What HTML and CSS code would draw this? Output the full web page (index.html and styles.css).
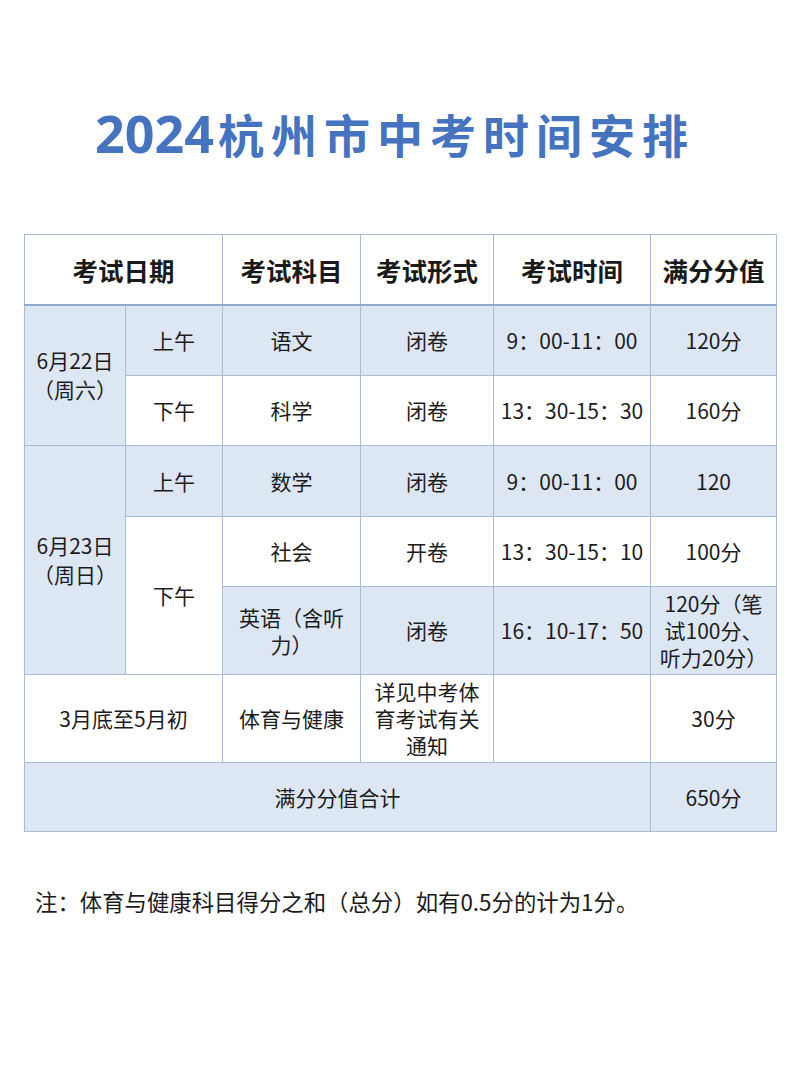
FILE: index.html
```html
<!DOCTYPE html>
<html lang="zh-CN">
<head>
<meta charset="utf-8">
<title>2024杭州市中考时间安排</title>
<link rel="stylesheet" href="styles.css">
</head>
<body>
<div class="page">
  <h1 class="title"><span class="year">2024</span><span class="cjk">杭州市中考时间安排</span></h1>
  <table class="schedule">
    <colgroup>
      <col class="c1"><col class="c2"><col class="c3"><col class="c4"><col class="c5"><col class="c6">
    </colgroup>
    <thead>
      <tr class="h-head">
        <th colspan="2">考试日期</th>
        <th>考试科目</th>
        <th>考试形式</th>
        <th>考试时间</th>
        <th>满分分值</th>
      </tr>
    </thead>
    <tbody>
      <tr class="h71">
        <td rowspan="2" class="blue date">6月22日<br>（周六）</td>
        <td class="blue">上午</td>
        <td class="blue">语文</td>
        <td class="blue">闭卷</td>
        <td class="blue time">9：00-11：00</td>
        <td class="blue">120分</td>
      </tr>
      <tr class="h70">
        <td>下午</td>
        <td>科学</td>
        <td>闭卷</td>
        <td class="time">13：30-15：30</td>
        <td>160分</td>
      </tr>
      <tr class="h71">
        <td rowspan="3" class="blue date">6月23日<br>（周日）</td>
        <td class="blue">上午</td>
        <td class="blue">数学</td>
        <td class="blue">闭卷</td>
        <td class="blue time">9：00-11：00</td>
        <td class="blue">120</td>
      </tr>
      <tr class="h70">
        <td rowspan="2">下午</td>
        <td>社会</td>
        <td>开卷</td>
        <td class="time">13：30-15：10</td>
        <td>100分</td>
      </tr>
      <tr class="h88">
        <td class="blue">英语（含听力）</td>
        <td class="blue">闭卷</td>
        <td class="blue time">16：10-17：50</td>
        <td class="blue">120分（笔试100分、听力20分）</td>
      </tr>
      <tr class="h88">
        <td colspan="2">3月底至5月初</td>
        <td>体育与健康</td>
        <td>详见中考体育考试有关通知</td>
        <td></td>
        <td>30分</td>
      </tr>
      <tr class="h69">
        <td colspan="5" class="blue">满分分值合计</td>
        <td class="blue">650分</td>
      </tr>
    </tbody>
  </table>
  <p class="note">注：体育与健康科目得分之和（总分）如有0.5分的计为1分。</p>
</div>
</body>
</html>
```

FILE: styles.css
```css
html, body {
  margin: 0;
  padding: 0;
  background: #ffffff;
}

.page {
  width: 800px;
  height: 1067px;
  font-family: "Noto Sans CJK SC", "Noto Sans", sans-serif;
  color: #1c1c1c;
  overflow: hidden;
}

.title {
  margin: 0;
  padding: 98px 0 0 95px;
  height: 234px;
  box-sizing: border-box;
  color: #4673bf;
  font-weight: 700;
  line-height: 70px;
  white-space: nowrap;
}

.title .year {
  font-family: "Noto Sans", sans-serif;
  font-size: 52px;
  letter-spacing: 0;
}

.title .cjk {
  font-family: "Noto Sans CJK SC", sans-serif;
  font-size: 46px;
  letter-spacing: 7px;
  margin-left: 4px;
}

.schedule {
  margin: 0 0 0 24px;
  width: 752px;
  table-layout: fixed;
  border-collapse: collapse;
  border: 1px solid #a9bcd6;
}

.c1 { width: 101px; }
.c2 { width: 97px; }
.c3 { width: 138px; }
.c4 { width: 133px; }
.c5 { width: 157px; }
.c6 { width: 126px; }

.schedule th,
.schedule td {
  border: 1px solid #a9bcd6;
  text-align: center;
  vertical-align: middle;
  padding: 0 8px;
  font-size: 21px;
  line-height: 27px;
  font-weight: 400;
}

.schedule th {
  font-size: 25.5px;
  font-weight: 700;
  color: #1a1a1a;
  border-bottom: 2px solid #8fa9cf;
  padding: 0 4px;
  white-space: nowrap;
}

.h-head { height: 70px; }
.h71 { height: 71px; }
.h70 { height: 70px; }
.h88 { height: 88px; }
.h69 { height: 69px; }

.schedule td.blue {
  background: #dde7f4;
}

.schedule td.date {
  padding: 0 2px;
  line-height: 29px;
}

.schedule td.time {
  padding: 0 4px;
  white-space: nowrap;
}

.note {
  margin: 54px 0 0 35px;
  font-size: 22.4px;
  line-height: 30px;
  color: #1a1a1a;
}
```
